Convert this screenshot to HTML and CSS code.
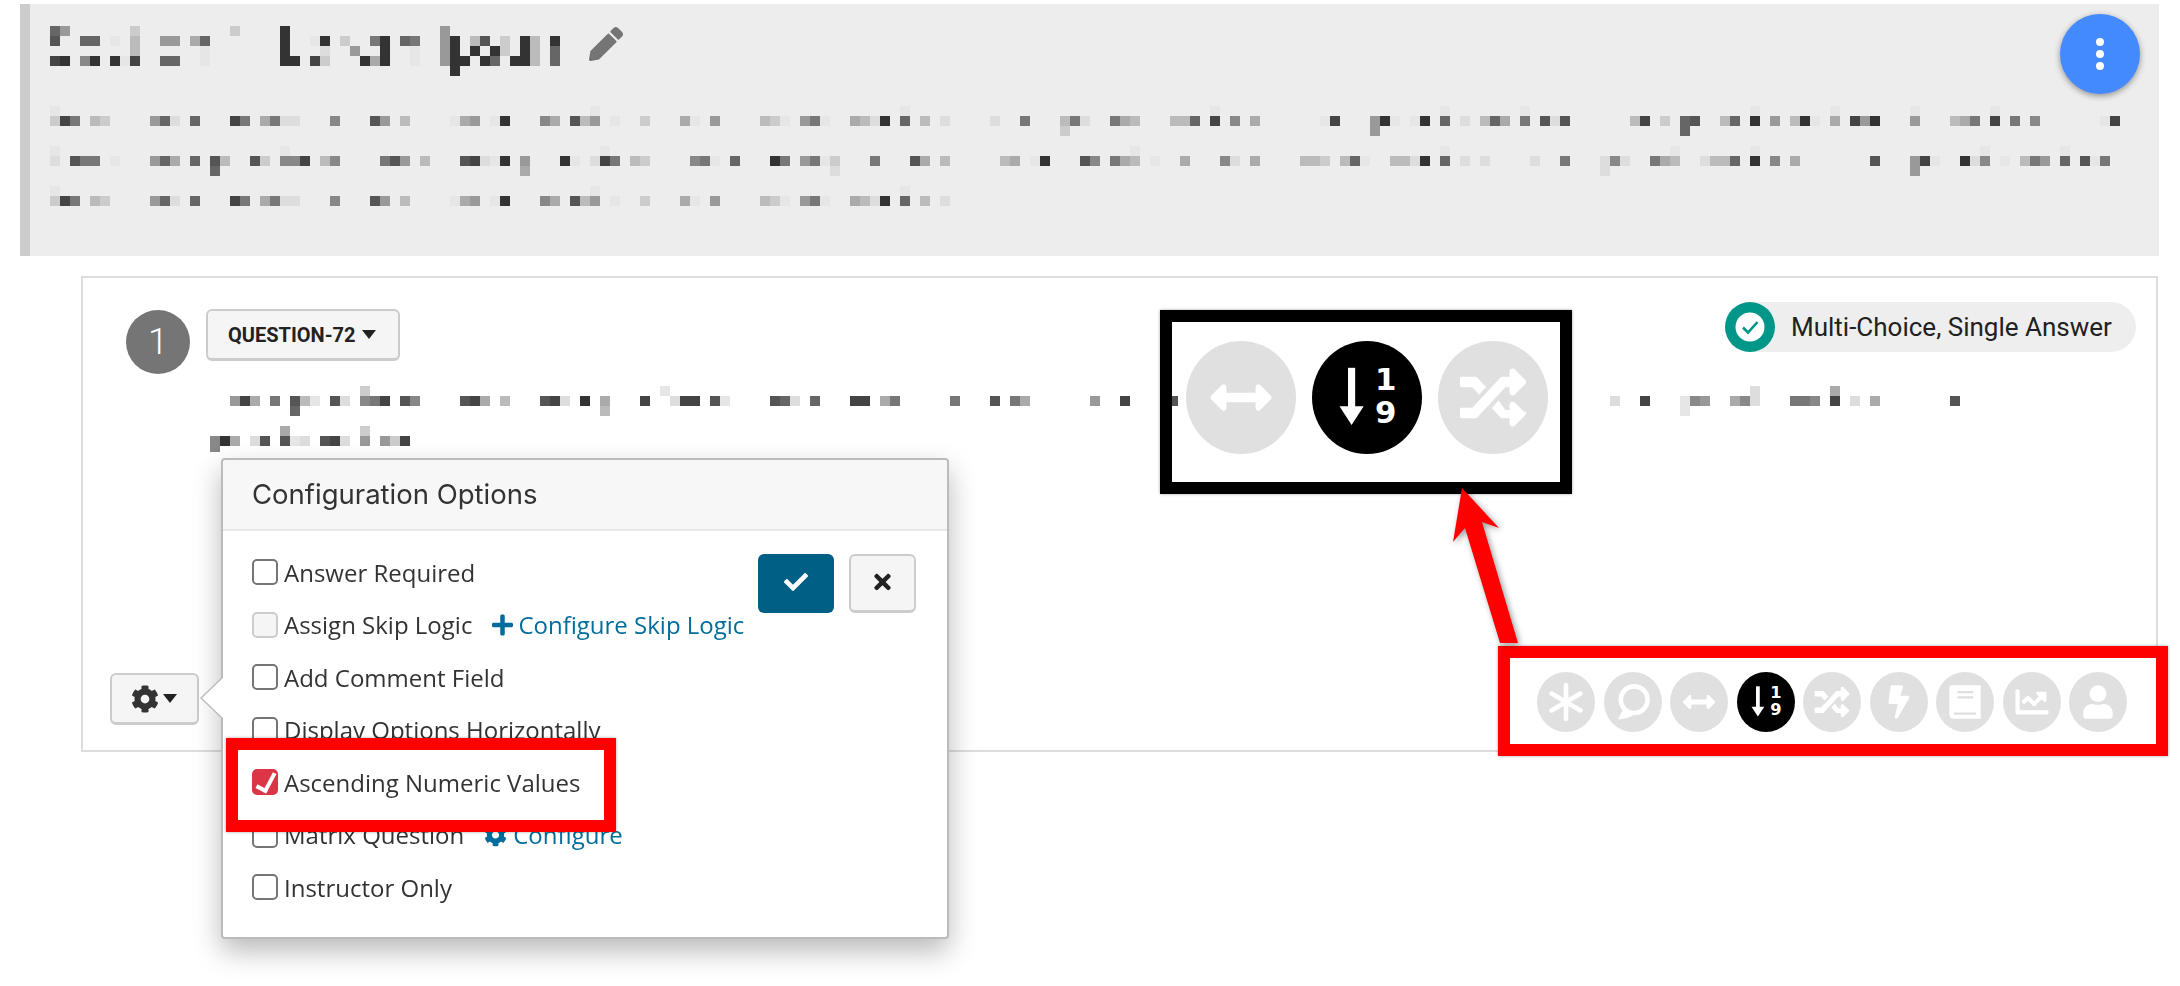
FILE: index.html
```html
<!DOCTYPE html>
<html lang="en">
<head>
    <meta charset="UTF-8">
    <title>Configuration Options</title>
    <link rel="stylesheet" href="styles.css">
</head>
<body>
    <svg class="sprites" aria-hidden="true">
        <symbol id="i-asterisk" viewBox="0 0 100 100">
            <path d="M50 21V79M25 35.5L75 64.5M25 64.5L75 35.5" fill="none" stroke="#fff" stroke-width="8" stroke-linecap="round"/>
        </symbol>
        <symbol id="i-comment" viewBox="0 0 100 100">
            <circle cx="52" cy="46" r="23" fill="none" stroke="#fff" stroke-width="8"/>
            <path d="M35 58L24 80C34 80 45 76 53 71Z" fill="#fff"/>
        </symbol>
        <symbol id="i-arrows" viewBox="-205 -205 922 922">
            <path fill="#fff" d="M377.941 169.941V216H134.059v-46.059c0-21.382-25.851-32.09-40.971-16.971L7.029 239.029c-9.373 9.373-9.373 24.568 0 33.941l86.059 86.059c15.119 15.119 40.971 4.411 40.971-16.971V296h243.882v46.059c0 21.382 25.851 32.09 40.971 16.971l86.059-86.059c9.373-9.373 9.373-24.568 0-33.941l-86.059-86.059c-15.119-15.12-40.971-4.412-40.971 16.97z"/>
        </symbol>
        <symbol id="i-sort" viewBox="0 0 100 100">
            <path d="M36 23V62" fill="none" stroke="#fff" stroke-width="6.5"/>
            <path d="M25 58H47L36 75Z" fill="#fff"/>
            <text class="sort-digit" x="67" y="43">1</text>
            <text class="sort-digit" x="67" y="73">9</text>
        </symbol>
        <symbol id="i-random" viewBox="-170 -170 852 852">
            <path fill="#fff" d="M504.971 359.029c9.373 9.373 9.373 24.569 0 33.941l-80 79.984c-15.01 15.01-40.971 4.49-40.971-16.971V416h-58.785a12.004 12.004 0 0 1-8.773-3.812l-70.556-75.596 53.333-57.143L352 352h32v-39.981c0-21.438 25.943-31.998 40.971-16.971l80 79.981zM12 176h84l52.781 56.551 53.333-57.143-70.556-75.596A11.999 11.999 0 0 0 122.785 96H12c-6.627 0-12 5.373-12 12v56c0 6.627 5.373 12 12 12zm372 0v39.984c0 21.46 25.961 31.98 40.971 16.971l80-79.984c9.373-9.373 9.373-24.569 0-33.941l-80-79.981C409.943 24.021 384 34.582 384 56.019V96h-58.785a12.004 12.004 0 0 0-8.773 3.812L96 336H12c-6.627 0-12 5.373-12 12v56c0 6.627 5.373 12 12 12h110.785c3.326 0 6.503-1.381 8.773-3.812L352 176h32z"/>
        </symbol>
        <symbol id="i-bolt" viewBox="-281 -185 883 883">
            <path fill="#fff" d="M296 160H180.6l42.6-129.8C227.2 15 215.7 0 200 0H56C44 0 33.8 8.9 32.2 20.8l-32 240C-1.7 275.2 9.5 288 24 288h118.7L96.6 482.5c-3.6 15.2 8 29.5 23.3 29.5 8.4 0 16.4-4.4 20.8-12l176-304c9.3-15.9-2.2-36-20.7-36z"/>
        </symbol>
        <symbol id="i-book" viewBox="0 0 100 100">
            <path fill="#fff" d="M28 21H77V79H31C26 79 23 76 23 72V26C23 23 25 21 28 21Z"/>
            <path d="M37 33H64M37 42H64M31 70H69" fill="none" stroke="#e0e0e0" stroke-width="4"/>
        </symbol>
        <symbol id="i-chart" viewBox="-193 -193 898 898">
            <path fill="#fff" d="M496 384H64V80c0-8.84-7.16-16-16-16H16C7.16 64 0 71.16 0 80v336c0 17.67 14.33 32 32 32h464c8.84 0 16-7.16 16-16v-32c0-8.84-7.16-16-16-16zM464 96H345.94c-21.38 0-32.09 25.85-16.97 40.97l32.4 32.4L288 242.75l-73.37-73.37c-12.5-12.5-32.76-12.5-45.25 0l-68.69 68.69c-6.25 6.25-6.25 16.38 0 22.63l22.62 22.62c6.25 6.25 16.38 6.25 22.63 0L192 237.25l73.37 73.37c12.5 12.5 32.76 12.5 45.25 0l96-96 32.4 32.4c15.12 15.12 40.97 4.41 40.97-16.97V112c0-8.84-7.16-16-16-16z"/>
        </symbol>
        <symbol id="i-user" viewBox="-217 -185 883 883">
            <path fill="#fff" d="M224 256c70.7 0 128-57.3 128-128S294.7 0 224 0 96 57.3 96 128s57.3 128 128 128zm89.6 32h-16.7c-22.2 10.2-46.9 16-72.9 16s-50.6-5.8-72.9-16h-16.7C60.2 288 0 348.2 0 422.4V464c0 26.5 21.5 48 48 48h352c26.5 0 48-21.5 48-48v-41.6c0-74.2-60.2-134.4-134.4-134.4z"/>
        </symbol>
        <symbol id="i-gear" viewBox="0 0 512 512">
            <path d="M487.4 315.7l-42.6-24.6c4.3-23.2 4.3-47 0-70.2l42.6-24.6c4.9-2.8 7.1-8.6 5.5-14-11.1-35.6-30-67.8-54.7-94.6-3.8-4.1-10-5.1-14.8-2.3L380.8 110c-17.9-15.4-38.5-27.3-60.8-35.1V25.8c0-5.6-3.9-10.5-9.4-11.7-36.7-8.2-74.3-7.8-109.2 0-5.5 1.2-9.4 6.1-9.4 11.7V75c-22.2 7.9-42.8 19.8-60.8 35.1L88.7 85.5c-4.9-2.8-11-1.9-14.8 2.3-24.7 26.7-43.6 58.9-54.7 94.6-1.7 5.4.6 11.2 5.5 14L67.3 221c-4.3 23.2-4.3 47 0 70.2l-42.6 24.6c-4.9 2.8-7.1 8.6-5.5 14 11.1 35.6 30 67.8 54.7 94.6 3.8 4.1 10 5.1 14.8 2.3l42.6-24.6c17.9 15.4 38.5 27.3 60.8 35.1v49.2c0 5.6 3.9 10.5 9.4 11.7 36.7 8.2 74.3 7.8 109.2 0 5.5-1.2 9.4-6.1 9.4-11.7v-49.2c22.2-7.9 42.8-19.8 60.8-35.1l42.6 24.6c4.9 2.8 11 1.9 14.8-2.3 24.7-26.7 43.6-58.9 54.7-94.6 1.5-5.5-.7-11.3-5.6-14.1zM256 336c-44.1 0-80-35.9-80-80s35.9-80 80-80 80 35.9 80 80-35.9 80-80 80z"/>
        </symbol>
    </svg>

    <div class="page">
        <header class="banner">
            <div class="banner-title">
                <canvas class="mosaic" width="520" height="50"
                    data-rows="0:69 8:c 18:c 23:3 39:9/0:5 3:66 6:e 8:b 11:99 14:a6 23:3 26:e3 29:c 32:73 35:67 39:93 42:b5 45:c 47:3b 50:3/8:b 15:e 23:3 27:d 30:9 33:3 36:e 39:93 42:3.3c 47:3b 50:6/0:43 3:83 6:3e4 11:66 15:e 23:33 26:4c 31:3a3 36:e 39:933 43:36 46:33b 50:6/40:3"></canvas>
                <svg class="pencil" viewBox="0 0 512 512"><path d="M497.9 142.1l-46.1 46.1c-4.7 4.7-12.3 4.7-17 0l-111-111c-4.7-4.7-4.7-12.3 0-17l46.1-46.1c18.7-18.7 49.1-18.7 67.9 0l60.1 60.1c18.8 18.7 18.8 49.1 0 67.9zM284.2 99.8L21.6 362.4.4 483.9c-2.9 16.4 11.4 30.6 27.8 27.8l121.5-21.3 262.6-262.6c4.7-4.7 4.7-12.3 0-17l-111-111c-4.8-4.7-12.4-4.7-17.1 0z"/></svg>
            </div>
            <canvas class="mosaic banner-text" width="2080" height="100"
                data-rows="0:e 54:e 85:e 116:e 139:e 147:e 170:e 178:e 186:e 194:e/0:c47.bc 10:96d.6 18:47.a7dd 28:8 32:59.b 40:ea9.e3 49:8a.5b9.e..c 63:ae.9 71:bce.97e 80:abd3.6.b.d 94:d 97:7 101:b7d 106:7ab 112:bb6.4.8.a 127:e4 132:93e.e3 139:6.d.b6a.7.5d5 158:b4.c.65 167:b6.3.9.b3e.a.493 186:9 190:ba7.4.7.8 205:e4/101:c 132:9 163:6//0:e 23:e 55:e 108:e 139:e 162:e 170:e 193:e 201:e/0:d.577.e 10:96a.6.5b 20:5c.884.b8 33:759.b 41:54de3.9 51:3e 54:d47.bc 64:87e.6 72:37.97ec 82:7 86:5a.b 95:ba.e3 103:58.7ab.e 113:a 117:8d.a 125:bbc.b6e 134:bbd3 139:6.d.d 148:d 151:7 155:d8d 160:7ab 165:dbb6.3.8.a 182:5 186:94e 191:3d8.e.b79.6.5e7/16:6 47:a 78:d 155:d 186:9//0:e 54:e 85:e/0:c47.bc 10:96d.6 18:47.a7dd 28:8 32:59.b 40:ea9.e3 49:8a.5b9.e..c 63:ae.9 71:bce.97e 80:abd3.6.b.d"></canvas>
            <button class="fab" type="button"><span></span><span></span><span></span></button>
        </header>

        <section class="card">
            <div class="card-head">
                <div class="num">1</div>
                <button class="btn btn-question" type="button">QUESTION-72<i class="caret"></i></button>
                <div class="chip">
                    <span class="chip-badge">
                        <svg viewBox="0 0 50 50"><circle cx="25" cy="25" r="14.5" fill="#fff"/><path d="M18 25.5L23 30.5L32.5 20" fill="none" stroke="#009688" stroke-width="2.6"/></svg>
                    </span>
                    <span class="chip-label">Multi-Choice, Single Answer</span>
                </div>
            </div>
            <canvas class="mosaic question-text" width="1760" height="66"
                data-rows="15:c 45:e 154:d 162:a/2:94a.7.5be.5d.874.58 25:54a.b 33:54d.3.a 43:4 46:d44.5e 56:56d.6 64:44.a7 74:7 78:5 80:7a 88:9 91:4 96:5 140:d 143:4 147:e89 152:a8d 158:778 162:4 164:d 166:a 174:5/8:6 39:b 147:e//7:a 15:c/0:83a.d5.5ed.54d.9.9c4/0:8"></canvas>
            <button class="btn btn-gear" type="button">
                <svg class="gear-icon"><use href="#i-gear"/></svg><i class="caret"></i>
            </button>
        </section>

        <div class="popover">
            <h3 class="popover-title">Configuration Options</h3>
            <div class="popover-body">
                <div class="options">
                    <label class="opt"><input type="checkbox">Answer Required</label>
                    <label class="opt"><input type="checkbox" disabled>Assign Skip Logic<a class="opt-link">
                        <svg class="plus-icon" viewBox="0 0 448 512"><path d="M416 208H272V64c0-17.67-14.33-32-32-32h-32c-17.67 0-32 14.33-32 32v144H32c-17.67 0-32 14.33-32 32v32c0 17.67 14.33 32 32 32h144v144c0 17.67 14.33 32 32 32h32c17.67 0 32-14.33 32-32V304h144c17.67 0 32-14.33 32-32v-32c0-17.67-14.33-32-32-32z"/></svg>Configure Skip Logic</a></label>
                    <label class="opt"><input type="checkbox">Add Comment Field</label>
                    <label class="opt"><input type="checkbox">Display Options Horizontally</label>
                    <label class="opt"><input type="checkbox" checked>Ascending Numeric Values</label>
                    <label class="opt"><input type="checkbox">Matrix Question<a class="opt-link">
                        <svg class="link-gear"><use href="#i-gear"/></svg>Configure</a></label>
                    <label class="opt"><input type="checkbox">Instructor Only</label>
                </div>
                <div class="actions">
                    <button class="btn-save" type="button">
                        <svg viewBox="0 0 512 512"><path d="M173.898 439.404l-166.4-166.4c-9.997-9.997-9.997-26.206 0-36.204l36.203-36.204c9.997-9.998 26.207-9.998 36.204 0L192 312.69 432.095 72.596c9.997-9.997 26.207-9.997 36.204 0l36.203 36.204c9.997 9.997 9.997 26.206 0 36.204l-294.4 294.401c-9.998 9.997-26.207 9.997-36.204-.001z"/></svg>
                    </button>
                    <button class="btn btn-cancel" type="button">
                        <svg viewBox="0 0 352 512"><path d="M242.72 256l100.07-100.07c12.28-12.28 12.28-32.19 0-44.48l-22.24-22.24c-12.28-12.28-32.19-12.28-44.48 0L176 189.28 75.93 89.21c-12.28-12.28-32.19-12.28-44.48 0L9.21 111.45c-12.28 12.28-12.28 32.19 0 44.48L109.28 256 9.21 356.07c-12.28 12.28-12.28 32.19 0 44.48l22.24 22.24c12.28 12.28 32.2 12.28 44.48 0L176 322.72l100.07 100.07c12.28 12.28 32.2 12.28 44.48 0l22.24-22.24c12.28-12.28 12.28-32.19 0-44.48L242.72 256z"/></svg>
                    </button>
                </div>
            </div>
        </div>

        <!-- annotations drawn over the screenshot -->
        <div class="note note-red note-option"></div>

        <div class="note note-black">
            <div class="tools tools-big">
                <span class="tool"><svg><use href="#i-arrows"/></svg></span>
                <span class="tool tool-on"><svg><use href="#i-sort"/></svg></span>
                <span class="tool"><svg><use href="#i-random"/></svg></span>
            </div>
        </div>

        <div class="note note-red note-tools">
            <div class="tools">
                <span class="tool"><svg><use href="#i-asterisk"/></svg></span>
                <span class="tool"><svg><use href="#i-comment"/></svg></span>
                <span class="tool"><svg><use href="#i-arrows"/></svg></span>
                <span class="tool tool-on"><svg><use href="#i-sort"/></svg></span>
                <span class="tool"><svg><use href="#i-random"/></svg></span>
                <span class="tool"><svg><use href="#i-bolt"/></svg></span>
                <span class="tool"><svg><use href="#i-book"/></svg></span>
                <span class="tool"><svg><use href="#i-chart"/></svg></span>
                <span class="tool"><svg><use href="#i-user"/></svg></span>
            </div>
        </div>

        <svg class="note-arrow" viewBox="0 0 90 180">
            <path d="M22 8L59 48L42 42L78 163H60L25 48L13 62Z" fill="#f00"/>
        </svg>
    </div>

    <script src="mosaic.js"></script>
</body>
</html>
```

FILE: styles.css
```css
* {
    box-sizing: border-box;
}
body {
    margin: 0;
    background-color: #fff;
    color: #333;
    font-family: "Open Sans", "Noto Sans", sans-serif;
}
.sprites {
    display: none;
}
.page {
    position: relative;
    height: 986px;
    overflow: hidden;
    padding-top: 4px;
}
.mosaic {
    display: block;
    flex: none;
}

/* grey banner */
.banner {
    position: relative;
    height: 252px;
    margin: 0 21px 0 20px;
    padding: 22px 0 0 20px;
    background-color: #ededed;
    border-left: 10px solid #ccc;
}
.banner-title {
    display: flex;
    align-items: flex-start;
}
.pencil {
    width: 34px;
    height: 34px;
    margin: 1px 0 0 19px;
    fill: #757575;
}
.banner-text {
    margin-top: 30px;
}
.fab {
    position: absolute;
    top: 10px;
    right: 19px;
    display: flex;
    flex-direction: column;
    align-items: center;
    justify-content: center;
    gap: 4px;
    width: 80px;
    height: 80px;
    padding: 0;
    background-color: #448aff;
    border: none;
    border-radius: 50%;
    box-shadow: 0 2px 6px rgba(0, 0, 0, 0.4);
}
.fab span {
    width: 8px;
    height: 8px;
    background-color: #fff;
    border-radius: 50%;
}

/* question card */
.card {
    display: flex;
    flex-direction: column;
    align-items: flex-start;
    height: 476px;
    margin: 20px 22px 0 81px;
    padding: 24px 20px 25px 43px;
    background-color: #fff;
    border: 2px solid #ddd;
}
.card-head {
    display: flex;
    align-items: flex-start;
    width: 100%;
}
.num {
    width: 64px;
    height: 64px;
    margin-top: 8px;
    background-color: #757575;
    border-radius: 50%;
    color: #fff;
    font-family: Roboto, sans-serif;
    font-size: 36px;
    font-weight: 300;
    line-height: 64px;
    text-align: center;
}
.btn {
    background-color: #f5f5f5;
    border: 2px solid #ccc;
    border-bottom-width: 3px;
    border-radius: 6px;
    color: #222;
}
.btn-question {
    display: flex;
    align-items: center;
    width: 194px;
    height: 52px;
    margin: 7px 0 0 16px;
    padding: 0 0 0 20px;
    font-family: Roboto, sans-serif;
    font-size: 20px;
    font-weight: 700;
    white-space: nowrap;
}
.caret {
    display: block;
    width: 0;
    height: 0;
    margin-left: 6px;
    border-top: 9px solid #222;
    border-left: 7.5px solid transparent;
    border-right: 7.5px solid transparent;
}
.chip {
    display: flex;
    align-items: center;
    width: 411px;
    height: 50px;
    margin-left: auto;
    background-color: #eee;
    border-radius: 25px;
}
.chip-badge {
    width: 50px;
    height: 50px;
    background-color: #009688;
    border-radius: 50%;
}
.chip-badge svg {
    display: block;
}
.chip-label {
    margin-left: 16px;
    color: #212121;
    font-family: Roboto, sans-serif;
    font-size: 26px;
    white-space: nowrap;
}
.question-text {
    margin: 12px 0 0 84px;
}
.btn-gear {
    display: flex;
    align-items: center;
    width: 89px;
    height: 52px;
    margin: auto 0 0 -16px;
    padding: 0 0 0 19px;
}
.gear-icon {
    width: 28px;
    height: 28px;
    fill: #333;
}
.btn-gear .caret {
    margin-left: 4px;
}

/* configuration popover */
.popover {
    position: absolute;
    top: 458px;
    left: 221px;
    width: 728px;
    height: 481px;
    background-color: #fff;
    border: 2px solid #bbb;
    border-radius: 4px;
    box-shadow: 0 12px 28px rgba(0, 0, 0, 0.28);
}
.popover::before,
.popover::after {
    content: "";
    position: absolute;
    top: 218px;
    border-top: 20px solid transparent;
    border-bottom: 20px solid transparent;
}
.popover::before {
    left: -23px;
    border-right: 21px solid #bbb;
}
.popover::after {
    left: -21px;
    border-right: 21px solid #fff;
}
.popover-title {
    height: 71px;
    margin: 0;
    padding-left: 29px;
    background-color: #f7f7f7;
    border-bottom: 2px solid #e8e8e8;
    border-radius: 4px 4px 0 0;
    color: #333;
    font-family: Inter, "Noto Sans", sans-serif;
    font-size: 27.5px;
    font-weight: 400;
    line-height: 69px;
}
.popover-body {
    display: flex;
    justify-content: space-between;
    padding: 15px 31px 0 29px;
}
.opt {
    display: flex;
    align-items: center;
    height: 52.5px;
    font-size: 24px;
    white-space: nowrap;
}
.opt input {
    flex: none;
    width: 26px;
    height: 26px;
    margin: 0 6px 0 0;
    appearance: none;
    background-color: #fff;
    border: 2px solid #757575;
    border-radius: 5px;
}
.opt input:disabled {
    background-color: #f5f5f5;
    border-color: #ccc;
}
.opt input:checked {
    position: relative;
    background-color: #dc3545;
    border-color: #dc3545;
}
.opt input:checked::after {
    content: "";
    position: absolute;
    left: 6px;
    top: -1px;
    width: 8px;
    height: 18px;
    border: solid #fff;
    border-width: 0 4px 4px 0;
    transform: rotate(28deg);
}
.opt-link {
    display: flex;
    align-items: center;
    margin-left: 20px;
    color: #006d9c;
}
.plus-icon {
    width: 21px;
    height: 24px;
    margin-right: 5px;
    fill: #006d9c;
}
.link-gear {
    width: 23px;
    height: 26px;
    margin-right: 6px;
    fill: #006d9c;
}
.actions {
    display: flex;
    gap: 15px;
    margin-top: 8px;
}
.btn-save {
    width: 76px;
    height: 59px;
    background-color: #005f85;
    border: none;
    border-radius: 6px;
}
.btn-save svg {
    width: 24px;
    height: 24px;
    fill: #fff;
}
.btn-cancel {
    width: 67px;
    height: 59px;
}
.btn-cancel svg {
    width: 17px;
    height: 24px;
    fill: #222;
}

/* annotations */
.note {
    position: absolute;
    border: 12px solid;
    box-shadow: 0 0 3px rgba(0, 0, 0, 0.35);
}
.note-red {
    border-color: #f00;
}
.note-black {
    top: 310px;
    left: 1160px;
    width: 412px;
    height: 184px;
    border-color: #000;
}
.note-option {
    top: 738px;
    left: 226px;
    width: 390px;
    height: 94px;
}
.note-tools {
    top: 646px;
    left: 1498px;
    width: 670px;
    height: 110px;
}
.tools {
    display: flex;
    gap: 8.5px;
    height: 100%;
    padding: 14px 0 0 27px;
    background-color: #fff;
}
.tools-big {
    gap: 16px;
    margin-left: 6px;
    padding: 19px 0 0 8px;
}
.tool {
    flex: none;
    display: block;
    width: 58px;
    height: 60px;
    background-color: #e0e0e0;
    border-radius: 50%;
}
.tools-big .tool {
    width: 110px;
    height: 113px;
}
.tool svg {
    display: block;
    width: 100%;
    height: 100%;
}
.tool-on {
    background-color: #000;
}
.sort-digit {
    fill: #fff;
    font-family: "DejaVu Sans", sans-serif;
    font-size: 28px;
    font-weight: 700;
    text-anchor: middle;
}
.note-arrow {
    position: absolute;
    top: 480px;
    left: 1440px;
    width: 90px;
    height: 180px;
    filter: drop-shadow(2px 2px 3px rgba(0, 0, 0, 0.4));
}
```

FILE: mosaic.js
```js
// pixelated placeholders: rows split by "/", runs are "column:shades", one hex digit per 10px tile
const TILE = 10;

function shade(digit) {
    return digit === 'e' ? '#e6e6e6' : '#' + digit + digit + digit;
}

document.querySelectorAll('.mosaic').forEach((canvas) => {
    const ctx = canvas.getContext('2d');
    canvas.dataset.rows.split('/').forEach((row, y) => {
        row.split(' ').filter(Boolean).forEach((run) => {
            const [start, shades] = run.split(':');
            [...shades].forEach((digit, i) => {
                if (digit === '.') return;
                ctx.fillStyle = shade(digit);
                ctx.fillRect((Number(start) + i) * TILE, y * TILE, TILE, TILE);
            });
        });
    });
});
```
